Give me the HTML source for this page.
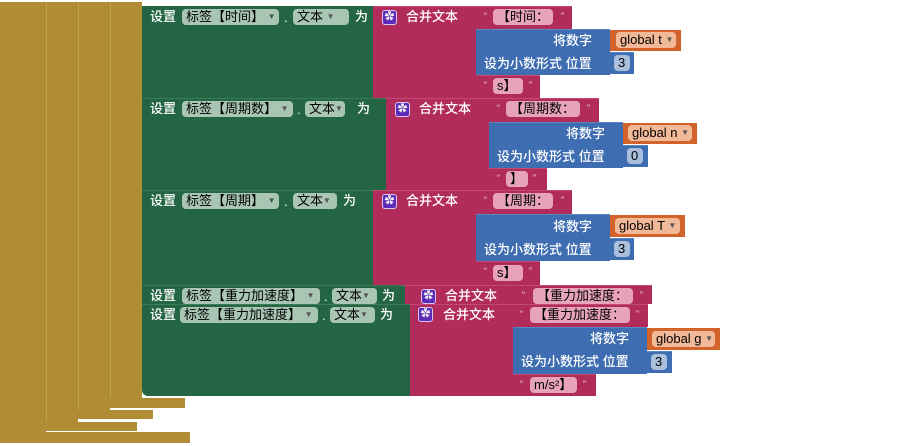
<!DOCTYPE html>
<html><head><meta charset="utf-8"><style>
body{margin:0;width:897px;height:446px;background:#fff;position:relative;overflow:hidden;font-family:"Liberation Sans","Noto Sans CJK SC",sans-serif;font-size:13px;color:#fff}
div,span{position:absolute;box-sizing:border-box}
.f span,.t span{position:static}
.g{background:#b08d35}
.gr{background:#246644}
.m{background:#b12b5b;border-top:1px solid #c24a74}
.b{background:#3e6db1;border-top:1px solid #5a86c4}
.o{background:#d2632a}
.t{white-space:nowrap;line-height:16px;font-weight:500}
.f{height:16px;border-radius:4px;line-height:16px;color:#000;white-space:nowrap;padding:0 4px}
.a{font-size:8px;color:#555;vertical-align:2px}
.fg{background:#a9c6b5}
.fp{background:#e6a3bb}
.fo{background:#f2b999}
.fb{background:#a9bfdc}
.ic{width:15px;height:15px;background:#5b2bb8;border:1px solid #d7c8f0;border-radius:3px;font-size:10px;text-align:center;line-height:13px;color:#eee}
.q{font-size:9px;color:#f3d4de}
</style></head><body>
<div class="g" style="left:0;top:2px;width:46px;height:441px"></div>
<div class="g" style="left:0;top:432px;width:190px;height:11px"></div>
<div class="g" style="left:46px;top:2px;width:32px;height:429px;border-left:1px solid #c4a453"></div>
<div class="g" style="left:46px;top:422px;width:91px;height:9px"></div>
<div class="g" style="left:78px;top:2px;width:32px;height:417px;border-left:1px solid #c4a453"></div>
<div class="g" style="left:78px;top:410px;width:75px;height:9px"></div>
<div class="g" style="left:110px;top:2px;width:32px;height:406px;border-left:1px solid #c4a453"></div>
<div class="g" style="left:110px;top:398px;width:75px;height:10px"></div>

<div class="gr" style="left:142px;top:6px;width:231px;height:92px"></div>
<div class="t" style="left:150px;top:9px">设置</div>
<div class="f fg" style="left:182px;top:9px;width:97px">标签【时间】 <span class="a">▼</span></div>
<div class="t" style="left:284px;top:10px">.</div>
<div class="f fg" style="left:293px;top:9px;width:56px">文本 <span class="a">▼</span></div>
<div class="t" style="left:355px;top:9px">为</div>
<div class="m" style="left:373px;top:6px;width:103px;height:92px"></div>
<div class="ic" style="left:382px;top:10px">✿</div>
<div class="t" style="left:406px;top:9px">合并文本</div>
<div class="m" style="left:476px;top:6px;width:96px;height:23px"></div>
<div class="t q" style="left:484px;top:8px">“</div>
<div class="f fp" style="left:493px;top:9px;width:60px">【时间：</div>
<div class="t q" style="left:561px;top:8px">”</div>
<div class="b" style="left:476px;top:29px;width:134px;height:46px"></div>
<div class="t" style="left:553px;top:33px">将数字</div>
<div class="t" style="left:484px;top:56px">设为小数形式 位置</div>
<div class="o" style="left:610px;top:30px;width:71px;height:21px"></div>
<div class="f fo" style="left:616px;top:32px;width:60px">global t <span class="a">▼</span></div>
<div class="b" style="left:610px;top:52px;width:24px;height:22px"></div>
<div class="f fb" style="left:614px;top:55px;width:16px">3</div>
<div class="m" style="left:476px;top:75px;width:64px;height:23px"></div>
<div class="t q" style="left:484px;top:77px">“</div>
<div class="f fp" style="left:493px;top:78px;width:30px">s】</div>
<div class="t q" style="left:529px;top:77px">”</div>

<div class="gr" style="left:142px;top:98px;width:244px;height:92px;border-top:1px solid #3d7a5a"></div>
<div class="t" style="left:150px;top:101px">设置</div>
<div class="f fg" style="left:182px;top:101px;width:111px">标签【周期数】 <span class="a">▼</span></div>
<div class="t" style="left:297px;top:102px">.</div>
<div class="f fg" style="left:305px;top:101px;width:40px">文本<span class="a">▼</span></div>
<div class="t" style="left:357px;top:101px">为</div>
<div class="m" style="left:386px;top:98px;width:103px;height:92px"></div>
<div class="ic" style="left:395px;top:102px">✿</div>
<div class="t" style="left:419px;top:101px">合并文本</div>
<div class="m" style="left:489px;top:98px;width:110px;height:24px"></div>
<div class="t q" style="left:497px;top:100px">“</div>
<div class="f fp" style="left:506px;top:101px;width:74px">【周期数：</div>
<div class="t q" style="left:587px;top:100px">”</div>
<div class="b" style="left:489px;top:122px;width:134px;height:46px"></div>
<div class="t" style="left:566px;top:126px">将数字</div>
<div class="t" style="left:497px;top:149px">设为小数形式 位置</div>
<div class="o" style="left:623px;top:123px;width:74px;height:21px"></div>
<div class="f fo" style="left:628px;top:125px;width:64px">global n <span class="a">▼</span></div>
<div class="b" style="left:623px;top:145px;width:25px;height:22px"></div>
<div class="f fb" style="left:627px;top:148px;width:16px">0</div>
<div class="m" style="left:489px;top:168px;width:58px;height:22px"></div>
<div class="t q" style="left:497px;top:170px">“</div>
<div class="f fp" style="left:506px;top:171px;width:22px">】</div>
<div class="t q" style="left:533px;top:170px">”</div>

<div class="gr" style="left:142px;top:190px;width:231px;height:95px;border-top:1px solid #3d7a5a"></div>
<div class="t" style="left:150px;top:193px">设置</div>
<div class="f fg" style="left:182px;top:193px;width:97px">标签【周期】 <span class="a">▼</span></div>
<div class="t" style="left:284px;top:194px">.</div>
<div class="f fg" style="left:293px;top:193px;width:44px">文本<span class="a">▼</span></div>
<div class="t" style="left:343px;top:193px">为</div>
<div class="m" style="left:373px;top:190px;width:103px;height:95px"></div>
<div class="ic" style="left:382px;top:194px">✿</div>
<div class="t" style="left:406px;top:193px">合并文本</div>
<div class="m" style="left:476px;top:190px;width:96px;height:24px"></div>
<div class="t q" style="left:484px;top:192px">“</div>
<div class="f fp" style="left:493px;top:193px;width:60px">【周期：</div>
<div class="t q" style="left:561px;top:192px">”</div>
<div class="b" style="left:476px;top:214px;width:134px;height:47px"></div>
<div class="t" style="left:553px;top:219px">将数字</div>
<div class="t" style="left:484px;top:242px">设为小数形式 位置</div>
<div class="o" style="left:610px;top:215px;width:75px;height:22px"></div>
<div class="f fo" style="left:615px;top:218px;width:65px">global T <span class="a">▼</span></div>
<div class="b" style="left:610px;top:238px;width:24px;height:22px"></div>
<div class="f fb" style="left:614px;top:241px;width:16px">3</div>
<div class="m" style="left:476px;top:261px;width:64px;height:24px"></div>
<div class="t q" style="left:484px;top:263px">“</div>
<div class="f fp" style="left:493px;top:265px;width:30px">s】</div>
<div class="t q" style="left:529px;top:263px">”</div>

<div class="gr" style="left:142px;top:285px;width:263px;height:19px;border-top:1px solid #3d7a5a"></div>
<div class="t" style="left:150px;top:288px">设置</div>
<div class="f fg" style="left:182px;top:288px;width:138px">标签【重力加速度】 <span class="a">▼</span></div>
<div class="t" style="left:324px;top:289px">.</div>
<div class="f fg" style="left:332px;top:288px;width:45px">文本<span class="a">▼</span></div>
<div class="t" style="left:382px;top:288px">为</div>
<div class="m" style="left:405px;top:285px;width:108px;height:19px"></div>
<div class="ic" style="left:421px;top:289px">✿</div>
<div class="t" style="left:445px;top:288px">合并文本</div>
<div class="m" style="left:513px;top:285px;width:139px;height:19px"></div>
<div class="t q" style="left:522px;top:287px">“</div>
<div class="f fp" style="left:533px;top:288px;width:100px">【重力加速度：</div>
<div class="t q" style="left:640px;top:287px">”</div>

<div class="gr" style="left:142px;top:304px;width:268px;height:92px;border-top:1px solid #3d7a5a;border-bottom-left-radius:6px"></div>
<div class="t" style="left:150px;top:307px">设置</div>
<div class="f fg" style="left:180px;top:307px;width:138px">标签【重力加速度】 <span class="a">▼</span></div>
<div class="t" style="left:322px;top:308px">.</div>
<div class="f fg" style="left:330px;top:307px;width:45px">文本<span class="a">▼</span></div>
<div class="t" style="left:380px;top:307px">为</div>
<div class="m" style="left:410px;top:304px;width:103px;height:92px"></div>
<div class="ic" style="left:418px;top:307px">✿</div>
<div class="t" style="left:443px;top:307px">合并文本</div>
<div class="m" style="left:513px;top:304px;width:135px;height:23px"></div>
<div class="t q" style="left:520px;top:306px">“</div>
<div class="f fp" style="left:530px;top:307px;width:100px">【重力加速度：</div>
<div class="t q" style="left:636px;top:306px">”</div>
<div class="b" style="left:513px;top:327px;width:134px;height:47px"></div>
<div class="t" style="left:590px;top:331px">将数字</div>
<div class="t" style="left:521px;top:354px">设为小数形式 位置</div>
<div class="o" style="left:647px;top:328px;width:73px;height:22px"></div>
<div class="f fo" style="left:652px;top:331px;width:63px">global g <span class="a">▼</span></div>
<div class="b" style="left:647px;top:351px;width:25px;height:22px"></div>
<div class="f fb" style="left:651px;top:354px;width:16px">3</div>
<div class="m" style="left:513px;top:374px;width:83px;height:22px"></div>
<div class="t q" style="left:520px;top:376px">“</div>
<div class="f fp" style="left:530px;top:377px;width:47px">m/s²】</div>
<div class="t q" style="left:583px;top:376px">”</div>
</body></html>
